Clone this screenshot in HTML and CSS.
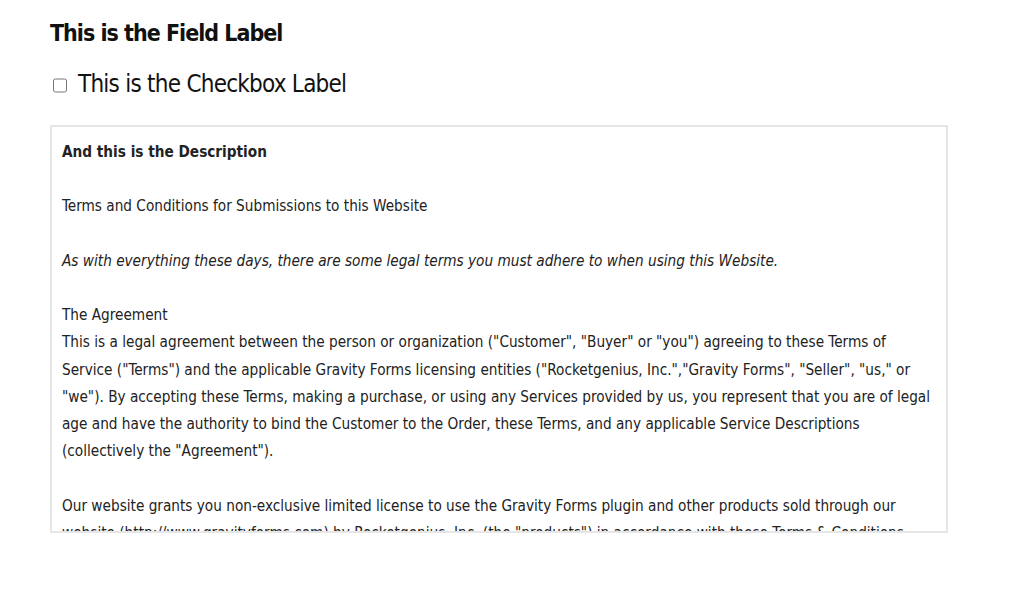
FILE: index.html
```html
<!DOCTYPE html>
<html lang="en">
<head>
    <meta charset="UTF-8">
    <title>Field Preview</title>
    <link rel="stylesheet" href="styles.css">
</head>
<body>
    <div class="field">
        <label class="field-label">This is the Field Label</label>
        <div class="checkbox-row">
            <input type="checkbox" id="consent">
            <label for="consent">This is the Checkbox Label</label>
        </div>
        <div class="description">
            <p class="desc-title">And this is the Description</p>
            <p>Terms and Conditions for Submissions to this Website</p>
            <p><em>As with everything these days, there are some legal terms you must adhere to when using this Website.</em></p>
            <p>The Agreement<br>
            This is a legal agreement between the person or organization ("Customer", "Buyer" or "you") agreeing to these Terms of Service ("Terms") and the applicable Gravity Forms licensing entities ("Rocketgenius, Inc.","Gravity Forms", "Seller", "us," or "we"). By accepting these Terms, making a purchase, or using any Services provided by us, you represent that you are of legal age and have the authority to bind the Customer to the Order, these Terms, and any applicable Service Descriptions (collectively the "Agreement").</p>
            <p>Our website grants you non-exclusive limited license to use the Gravity Forms plugin and other products sold through our website (http://www.gravityforms.com) by Rocketgenius, Inc. (the "products") in accordance with these Terms &amp; Conditions.</p>
        </div>
    </div>
</body>
</html>
```

FILE: styles.css
```css
body {
    margin: 0;
    padding: 0;
    background: #fff;
    color: #111;
    font-family: "DejaVu Sans", sans-serif;
    font-stretch: condensed;
}
.field {
    padding: 18px 0 0 50px;
    width: 898px;
}
.field-label {
    display: block;
    font-size: 23px;
    font-weight: bold;
    letter-spacing: -1px;
    line-height: 30px;
}
.checkbox-row {
    display: flex;
    align-items: center;
    margin-top: 21px;
}
.checkbox-row input {
    width: 14px;
    height: 17px;
    margin: 3px 11px 0 3px;
}
.checkbox-row label {
    font-size: 24px;
    letter-spacing: -0.75px;
    line-height: 30px;
}
.description {
    margin-top: 26px;
    height: 392px;
    overflow: hidden;
    border: 2px solid #e6e6e6;
    padding: 12px 10px 0 10px;
    font-size: 15.2px;
    line-height: 27.2px;
    color: #222;
}
.description p {
    margin: 0 0 27.2px 0;
}
.desc-title {
    font-weight: bold;
}
```
